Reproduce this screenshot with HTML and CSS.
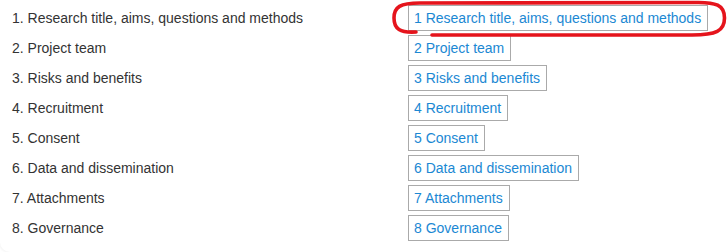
FILE: index.html
```html
<!DOCTYPE html>
<html>
<head>
<meta charset="utf-8">
<link rel="stylesheet" href="styles.css">
</head>
<body>
<div class="card">
  <div class="grid">
    <div class="label">1. Research title, aims, questions and methods</div>
    <div class="cell"><a class="btn" href="#">1 Research title, aims, questions and methods</a></div>
    <div class="label">2. Project team</div>
    <div class="cell"><a class="btn" href="#">2 Project team</a></div>
    <div class="label">3. Risks and benefits</div>
    <div class="cell"><a class="btn" href="#">3 Risks and benefits</a></div>
    <div class="label">4. Recruitment</div>
    <div class="cell"><a class="btn" href="#">4 Recruitment</a></div>
    <div class="label">5. Consent</div>
    <div class="cell"><a class="btn" href="#">5 Consent</a></div>
    <div class="label">6. Data and dissemination</div>
    <div class="cell"><a class="btn" href="#">6 Data and dissemination</a></div>
    <div class="label">7. Attachments</div>
    <div class="cell"><a class="btn" href="#">7 Attachments</a></div>
    <div class="label">8. Governance</div>
    <div class="cell"><a class="btn" href="#">8 Governance</a></div>
  </div>
  <svg class="annot" width="727" height="252" viewBox="0 0 727 252">
    <path d="M 416 32 C 400 33 394 29 394 18 C 394 7 400 3 420 3 L 695 2.5 C 716 2 724.5 5 724.5 18 C 724.5 31 716 35 692 35 L 432 35" fill="none" stroke="#e5141c" stroke-width="3.6" stroke-linecap="round"/>
  </svg>
</div>
</body>
</html>
```
FILE: styles.css
```css
html, body {
  margin: 0;
  padding: 0;
  background: #fff;
}
.card {
  position: relative;
  width: 727px;
  height: 252px;
  overflow: hidden;
  font-family: "Liberation Sans", Arial, sans-serif;
  font-size: 14px;
  border-bottom-left-radius: 10px;
  box-shadow: -1px 1px 2px rgba(0,0,0,0.04);
}
.grid {
  display: grid;
  grid-template-columns: 396px auto;
  grid-auto-rows: 30px;
  padding: 3px 0 0 12px;
  align-items: center;
}
.label {
  color: #333;
  line-height: 20px;
}
.cell {
  display: flex;
}
.btn {
  display: block;
  height: 24px;
  line-height: 24px;
  padding: 0 6px 0 5px;
  border: 1px solid #aaa;
  color: #1b88d3;
  text-decoration: none;
}
.annot {
  position: absolute;
  left: 0;
  top: 0;
  pointer-events: none;
}
```
